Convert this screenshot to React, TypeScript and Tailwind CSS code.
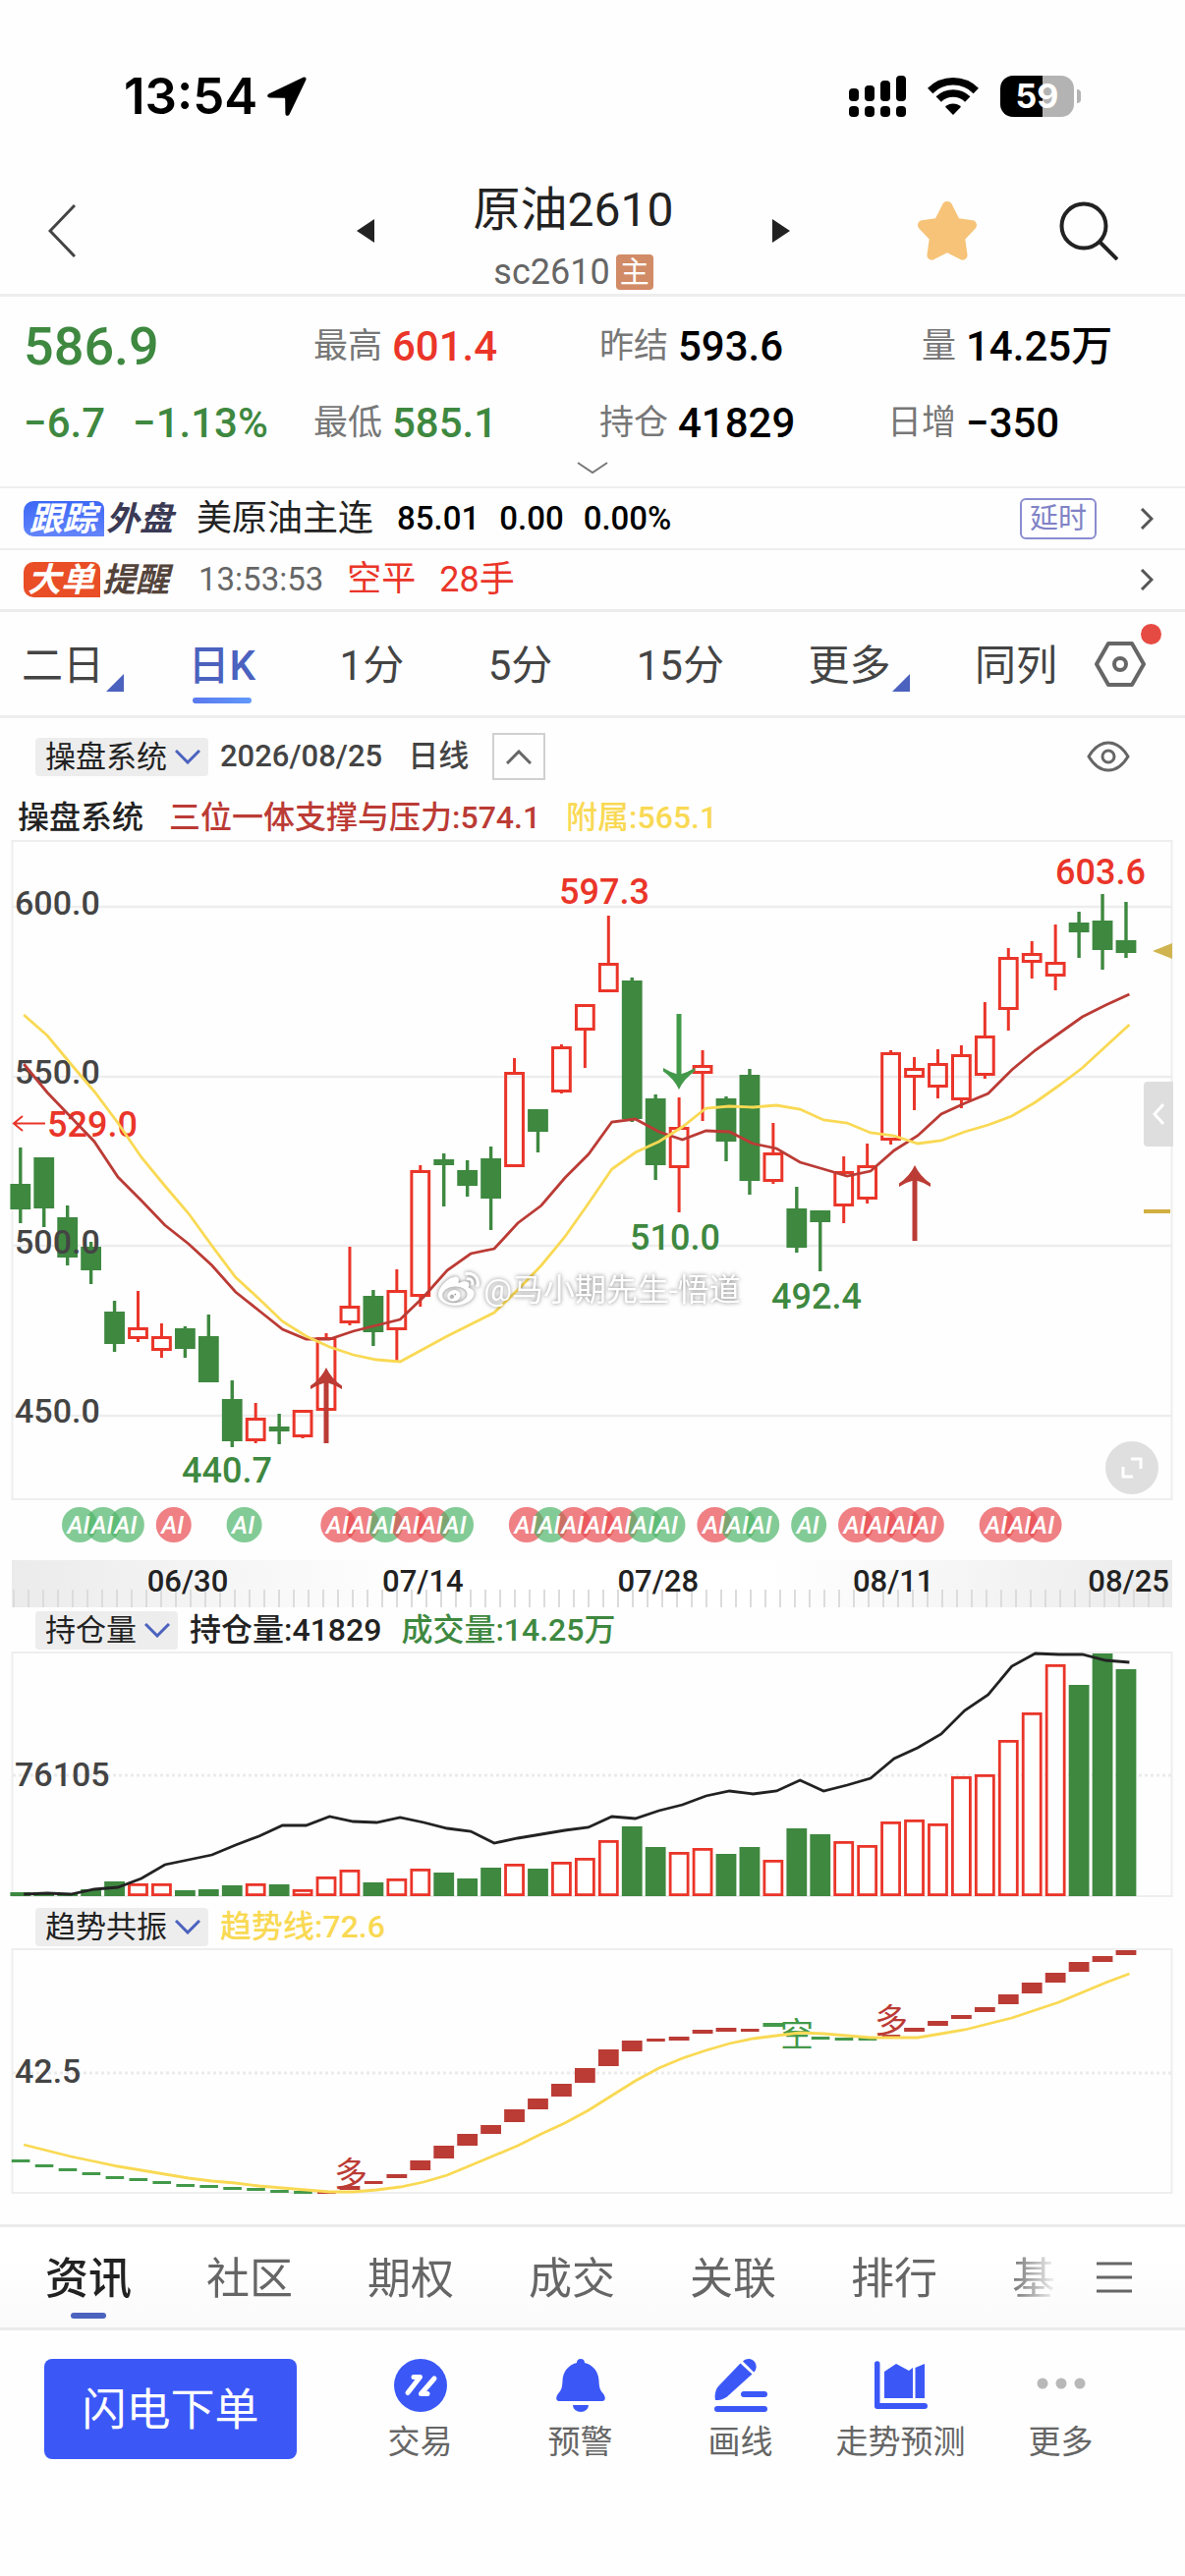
import { useState } from "react";
import type { ReactNode } from "react";
import { clsx } from "clsx";
import { FaWeibo } from "react-icons/fa";

type Candle = {
  up: boolean;
  high: number;
  top: number;
  bottom: number;
  low: number;
};

// All panes share one plot space 1206 units wide; each <svg> shows its own band of it.
const STEP = 23.94;
const barX = (i: number) => 20.8 + i * STEP;
const lineX = (i: number) => 24.2 + i * STEP;

const RED = "#ea3529";
const GREEN = "#3e8840";
const DARK_RED = "#bb3b35";
const YELLOW = "#f9d954";

// up, high, top, bottom, low
const RAW: [0 | 1, number, number, number, number][] = [
  [0, 1168, 1205, 1231, 1245],
  [0, 1178, 1178, 1230, 1249],
  [0, 1227, 1239, 1280, 1288],
  [0, 1264, 1269, 1293, 1307],
  [0, 1324, 1335, 1368, 1376],
  [1, 1314, 1351, 1363, 1366],
  [1, 1347, 1360, 1375, 1382],
  [0, 1350, 1352, 1373, 1382],
  [0, 1338, 1360, 1407, 1407],
  [0, 1405, 1424, 1467, 1473],
  [1, 1428, 1443, 1467, 1469],
  [0, 1439, 1452, 1457, 1470],
  [1, 1435, 1435, 1463, 1464],
  [1, 1357, 1361, 1436, 1436],
  [1, 1269, 1329, 1347, 1349],
  [0, 1313, 1319, 1356, 1370],
  [1, 1292, 1313, 1354, 1385],
  [1, 1186, 1191, 1320, 1330],
  [0, 1174, 1180, 1186, 1228],
  [0, 1181, 1191, 1207, 1218],
  [0, 1167, 1179, 1220, 1252],
  [1, 1077, 1091, 1188, 1188],
  [0, 1129, 1129, 1152, 1173],
  [1, 1063, 1065, 1112, 1113],
  [1, 1022, 1022, 1049, 1087],
  [1, 932, 980, 1010, 1010],
  [0, 995, 998, 1139, 1142],
  [0, 1114, 1118, 1186, 1201],
  [1, 1117, 1147, 1189, 1234],
  [1, 1069, 1084, 1093, 1141],
  [0, 1116, 1118, 1162, 1182],
  [0, 1088, 1094, 1202, 1216],
  [1, 1143, 1173, 1203, 1205],
  [0, 1208, 1230, 1270, 1275],
  [0, 1232, 1232, 1244, 1294],
  [1, 1177, 1192, 1228, 1245],
  [1, 1164, 1186, 1221, 1225],
  [1, 1069, 1071, 1161, 1165],
  [1, 1076, 1087, 1097, 1130],
  [1, 1068, 1082, 1107, 1118],
  [1, 1064, 1073, 1120, 1128],
  [1, 1020, 1054, 1095, 1098],
  [1, 965, 974, 1028, 1049],
  [1, 958, 970, 980, 996],
  [1, 941, 979, 994, 1008],
  [0, 928, 939, 949, 975],
  [0, 910, 937, 967, 987],
  [0, 918, 957, 970, 975],
];

const CANDLES: Candle[] = RAW.map(([up, high, top, bottom, low]) => ({
  up: up === 1,
  high,
  top,
  bottom,
  low,
}));

const SUPPORT_LINE = [
  1083, 1112, 1137, 1162, 1198, 1222, 1247, 1266, 1288, 1315, 1334, 1353, 1363, 1363, 1355, 1349,
  1343, 1320, 1293, 1276, 1271, 1245, 1227, 1199, 1175, 1142, 1139, 1152, 1160, 1151, 1152, 1164,
  1169, 1183, 1190, 1197, 1192, 1171, 1156, 1134, 1123, 1113, 1089, 1069, 1052, 1035, 1023, 1012,
];

const AUX_LINE = [
  1033, 1054, 1083, 1111, 1143, 1178, 1207, 1235, 1268, 1300, 1322, 1345, 1360, 1371, 1379, 1384,
  1386, 1373, 1360, 1348, 1336, 1313, 1288, 1259, 1225, 1190, 1173, 1162, 1147, 1128, 1126, 1127,
  1125, 1129, 1140, 1143, 1153, 1156, 1164, 1161, 1152, 1145, 1136, 1122, 1105, 1087, 1065, 1043,
];

const VOLUME_TOPS = [
  1926, 1927, 1927, 1923, 1915, 1917, 1917, 1924, 1923, 1919, 1917, 1918, 1923, 1910, 1903, 1916,
  1912, 1902, 1906, 1912, 1901, 1897, 1902, 1895, 1891, 1873, 1859, 1880, 1885, 1881, 1887, 1880,
  1893, 1861, 1867, 1874, 1878, 1854, 1852, 1856, 1808, 1806, 1771, 1743, 1694, 1715, 1683, 1699,
];

const OPEN_INTEREST = [
  1928, 1927, 1928, 1923, 1921, 1912, 1898, 1893, 1888, 1878, 1869, 1858, 1858, 1849, 1854, 1855,
  1850, 1855, 1861, 1864, 1876, 1871, 1867, 1863, 1860, 1849, 1851, 1843, 1837, 1828, 1823, 1826,
  1823, 1812, 1823, 1817, 1810, 1790, 1779, 1765, 1741, 1725, 1696, 1683, 1684, 1684, 1690, 1692,
];

// trend bars: top, height
const TREND_BARS: [number, number][] = [
  [2197, 3], [2202, 3], [2206, 3], [2210, 3], [2214, 3], [2216, 3], [2219, 3], [2222, 3],
  [2223, 3], [2225, 3], [2226, 3], [2228, 3], [2229, 3], [2230, 2], [2224, 4], [2219, 3],
  [2212, 4], [2198, 10], [2183, 13], [2171, 12], [2162, 9], [2146, 13], [2135, 11], [2120, 13],
  [2104, 15], [2085, 17], [2076, 11], [2074, 3], [2072, 4], [2065, 4], [2063, 4], [2064, 3],
  [2058, 4], [2066, 3], [2072, 3], [2073, 3], [2073, 3], [2070, 3], [2063, 4], [2056, 5],
  [2050, 4], [2042, 5], [2029, 10], [2017, 11], [2007, 10], [1996, 10], [1990, 6], [1984, 5],
];

const TREND_LINE = [
  2182, 2188, 2194, 2199, 2204, 2208, 2212, 2216, 2219, 2221, 2224, 2226, 2228, 2230, 2230, 2228,
  2225, 2220, 2213, 2203, 2193, 2183, 2171, 2160, 2147, 2132, 2117, 2104, 2094, 2086, 2079, 2074,
  2071, 2068, 2069, 2071, 2073, 2073, 2073, 2069, 2065, 2059, 2053, 2045, 2037, 2027, 2017, 2008,
];

const AI_MARKERS: [number, "r" | "g"][] = [
  [0, "g"], [1, "g"], [2, "g"], [4, "r"], [7, "g"],
  [11, "r"], [12, "r"], [13, "g"], [14, "r"], [15, "r"], [16, "g"],
  [19, "r"], [20, "g"], [21, "r"], [22, "r"], [23, "r"], [24, "g"], [25, "g"],
  [27, "r"], [28, "g"], [29, "g"], [31, "g"],
  [33, "r"], [34, "r"], [35, "r"], [36, "r"],
  [39, "r"], [40, "r"], [41, "r"],
];

const points = (ys: number[]) => ys.map((y, i) => `${lineX(i).toFixed(1)},${y}`).join(" ");

function StatusBar() {
  return (
    <div className="flex items-center justify-between pt-[66px] pr-[106px] pb-7 pl-[126px] text-black">
      <div className="flex items-center gap-2.5">
        <span className="font-['Inter',sans-serif] text-[51px] leading-[64px] font-semibold">13:54</span>
        <svg viewBox="0 0 40 40" className="h-10 w-10">
          <path
            d="M36.5.7 2 17.200C-.8 18.600-.3 21.500 2.600 21.600L17 21.800c.8 0 1.200.4 1.200 1.200L18.400 37.400c.1 2.900 3 3.400 4.400.6L39.300 3.500C40.200 1.300 38.700-.2 36.500.7Z"
            fill="currentColor"
          />
        </svg>
      </div>
      <div className="flex items-center gap-[22px]">
        <svg viewBox="0 0 58 42" className="h-[42px] w-[58px]" fill="currentColor">
          {[13, 10, 5, 0].map((y, i) => (
            <g key={y}>
              <rect x={i * 16} y={y} width="10" height={26 - y} rx="4" />
              <rect x={i * 16} y="31" width="10" height="11" rx="4" />
            </g>
          ))}
        </svg>
        <svg viewBox="0 0 52 38" className="h-[38px] w-[52px]" fill="none" stroke="currentColor" strokeWidth="7.500">
          <path d="M2.700 13.500a33 33 0 0 1 46.600 0" />
          <path d="M11.200 22a21 21 0 0 1 29.600 0" />
          <path d="M26 38 18 29.800a11.500 11.500 0 0 1 16 0Z" fill="currentColor" stroke="none" />
        </svg>
        <div className="flex items-center gap-[3px]">
          <div className="flex h-[42px] w-[75px] items-center justify-center rounded-[13px] bg-linear-to-r from-black from-58% to-[#b3b3b3] to-58% font-['Inter',sans-serif] text-[34px] leading-[42px] font-bold text-white">
            59
          </div>
          <div className="h-3.5 w-1 rounded-r-full bg-[#b3b3b3]" />
        </div>
      </div>
    </div>
  );
}

function TitleBar() {
  return (
    <header className="relative flex items-center justify-between border-b-[3px] border-[#ededed] pt-6 pr-[68px] pb-[11px] pl-[49px]">
      <button aria-label="返回">
        <svg viewBox="0 0 28 54" className="h-[54px] w-7" fill="none" stroke="#444" strokeWidth="3">
          <path d="M27 1 2 27l25 26" />
        </svg>
      </button>
      <div className="absolute left-[363px] right-[402px] flex items-center justify-between">
        <button aria-label="上一个">
          <svg viewBox="0 0 18 24" className="h-6 w-[18px]" fill="#222">
            <path d="M18 0v24L0 12Z" />
          </svg>
        </button>
        <div className="flex flex-col items-center">
          <h1 className="text-[48px] leading-[84px] text-[#222]">原油2610</h1>
          <div className="flex items-center gap-1.5">
            <span className="text-[36px] leading-[42px] text-[#666]">sc2610</span>
            <span className="w-[38px] rounded bg-[#d18b66] text-center text-[30px] leading-9 text-white">主</span>
          </div>
        </div>
        <button aria-label="下一个">
          <svg viewBox="0 0 18 24" className="h-6 w-[18px]" fill="#222">
            <path d="M0 0v24l18-12Z" />
          </svg>
        </button>
      </div>
      <div className="flex h-[106px] items-center gap-[84px]">
        <button aria-label="自选">
          <svg viewBox="0 0 60 60" className="h-[60px] w-[60px]" fill="#f6c378">
            <path d="M25.500 2.500c1.700-3.400 7.300-3.400 9 0L42 17.200 56 19.300c4 .6 5.300 5.600 2.500 8.500L48.300 38.500 50.500 54c.6 4-3.600 7-7.100 5L30 52.200 16.600 59c-3.500 2-7.700-1-7.100-5l2.200-15.500L1.500 27.800C-1.300 24.900 0 19.900 4 19.300L18 17.200Z" />
          </svg>
        </button>
        <button aria-label="搜索">
          <svg viewBox="0 0 60 60" className="h-[60px] w-[60px]" fill="none" stroke="#222" strokeWidth="4">
            <circle cx="25" cy="25" r="22.500" />
            <path d="m41 41 18 18" />
          </svg>
        </button>
      </div>
    </header>
  );
}

function Quote({ label, value, tone }: { label: string; value: string; tone?: string }) {
  return (
    <div className="flex items-center gap-2.5">
      <span className="w-[70px] text-right text-[35px] text-[#777]">{label}</span>
      <span className={clsx("text-[42px] font-medium", tone ?? "text-black")}>{value}</span>
    </div>
  );
}

function QuoteBlock() {
  return (
    <section className="border-b-2 border-[#efefef] pt-3 pb-3 pl-6">
      <div className="grid grid-cols-[295fr_291fr_293fr_303fr] leading-[78px]">
        <span className="text-[54px] font-medium text-[#3e8840]">586.9</span>
        <Quote label="最高" value="601.4" tone="text-[#ea3529]" />
        <Quote label="昨结" value="593.6" />
        <Quote label="量" value="14.25万" />
        <div className="flex gap-7 text-[42px] font-medium text-[#3e8840]">
          <span>−6.7</span>
          <span>−1.13%</span>
        </div>
        <Quote label="最低" value="585.1" tone="text-[#3e8840]" />
        <Quote label="持仓" value="41829" />
        <Quote label="日增" value="−350" />
      </div>
      <button aria-label="展开" className="mx-auto block pr-6">
        <svg viewBox="0 0 32 13" className="h-[13px] w-8" fill="none" stroke="#777" strokeWidth="2">
          <path d="m1 1 15 10L31 1" />
        </svg>
      </button>
    </section>
  );
}

function Chevron() {
  return (
    <svg viewBox="0 0 14 22" className="h-[22px] w-3.5" fill="none" stroke="#555" strokeWidth="3">
      <path d="m2 1 10 10L2 21" />
    </svg>
  );
}

function NoticeRow({ children, last }: { children: ReactNode; last?: boolean }) {
  return (
    <a
      href="#"
      className={clsx(
        "flex h-[63px] items-center border-[#ededed] pr-8 pl-6 leading-[60px]",
        last ? "border-b-[3px]" : "border-b-2"
      )}
    >
      {children}
      <Chevron />
    </a>
  );
}

function Notices() {
  return (
    <section>
      <NoticeRow>
        <span className="flex items-center text-[34px] font-bold italic">
          <span className="h-9 w-[82px] rounded-l-[10px] rounded-tr-[8px] bg-linear-to-b from-[#3d68f6] to-[#6384fa] pl-1.5 leading-9 text-white">
            跟踪
          </span>
          <span className="w-[72px] pl-0.5 text-[#3b3a55]">外盘</span>
        </span>
        <span className="ml-[22px] text-[36px] text-[#222]">美原油主连</span>
        <span className="ml-6 flex gap-5 text-[33px] font-medium text-black">
          <span>85.01</span>
          <span>0.00</span>
          <span>0.00%</span>
        </span>
        <span className="mr-[44px] ml-auto rounded-md border-2 border-[#8a8cd0] px-2 text-[29px] leading-[38px] text-[#8082c6]">
          延时
        </span>
      </NoticeRow>
      <NoticeRow last>
        <span className="flex items-center text-[34px] font-bold italic">
          <span className="h-9 w-[78px] rounded-l-[10px] rounded-tr-[8px] bg-[#e94e26] pl-1 leading-9 text-white">
            大单
          </span>
          <span className="w-[72px] pl-0.5 text-[#54443c]">提醒</span>
        </span>
        <span className="ml-[28px] text-[33px] text-[#666]">13:53:53</span>
        <span className="ml-6 text-[35px] text-[#ea3529]">空平</span>
        <span className="mr-auto ml-6 text-[36px] text-[#ea3529]">28手</span>
      </NoticeRow>
    </section>
  );
}

function CornerMark() {
  return (
    <svg viewBox="0 0 18 18" className="absolute bottom-3 left-full ml-0.5 h-[18px] w-[18px]" fill="#4b62be">
      <path d="M18 0v18H0Z" />
    </svg>
  );
}

function PeriodTabs() {
  const [active, setActive] = useState("日K");
  const tabs = [
    { name: "二日", more: true },
    { name: "日K" },
    { name: "1分" },
    { name: "5分" },
    { name: "15分" },
    { name: "更多", more: true },
    { name: "同列" },
  ];
  return (
    <nav className="flex h-[108px] items-center gap-[38px] border-b-[3px] border-[#ededed] pr-10 pl-[22px]">
      <div className="flex flex-1 justify-between">
        {tabs.map((t) => (
          <button
            key={t.name}
            onClick={() => setActive(t.name)}
            className={clsx(
              "relative flex h-20 items-center pt-1 text-[42px]",
              active === t.name ? "font-medium text-[#4b62be]" : "text-[#444]"
            )}
          >
            {t.name}
            {t.more && <CornerMark />}
            {active === t.name && (
              <span className="absolute inset-x-1 bottom-0 h-1.5 rounded-full bg-linear-to-r from-[#5a78ee] to-[#5f99fa]" />
            )}
          </button>
        ))}
      </div>
      <button aria-label="设置" className="relative">
        <svg viewBox="0 0 52 46" className="h-[46px] w-[52px]" fill="none" stroke="#666" strokeWidth="4">
          <path d="M14 2h24l12 21-12 21H14L2 23Z" strokeLinejoin="round" />
          <circle cx="26" cy="23" r="6" />
        </svg>
        <span className="absolute -top-[18px] -right-4 h-[21px] w-[21px] rounded-full bg-[#e64b43]" />
      </button>
    </nav>
  );
}

function IndicatorSelect({ label, options }: { label: string; options: string[] }) {
  return (
    <div className="relative flex h-[39px] items-center rounded bg-[#ededed]">
      <select
        aria-label={label}
        className="-my-1 h-[47px] appearance-none pr-[42px] pl-2.5 text-[31px] leading-[47px] font-normal text-[#222]"
      >
        {options.map((o) => (
          <option key={o}>{o}</option>
        ))}
      </select>
      <svg
        viewBox="0 0 26 15"
        className="pointer-events-none absolute top-3 right-2 h-[15px] w-[26px]"
        fill="none"
        stroke="#4b62be"
        strokeWidth="3"
      >
        <path d="m1 1 12 12L25 1" />
      </svg>
    </div>
  );
}

function ChartToolbar() {
  return (
    <>
      <div className="flex h-[78px] items-center pr-14 pl-9 text-[31px] font-medium text-[#444]">
        <IndicatorSelect label="主图指标" options={["操盘系统", "均线", "布林线"]} />
        <span className="ml-3">2026/08/25</span>
        <span className="ml-[26px]">日线</span>
        <button
          aria-label="收起"
          className="ml-6 flex h-12 w-[54px] items-center justify-center border-2 border-[#d0d0d0]"
        >
          <svg viewBox="0 0 26 15" className="h-[15px] w-[26px]" fill="none" stroke="#666" strokeWidth="3">
            <path d="M1 14 13 2l12 12" />
          </svg>
        </button>
        <button aria-label="显示" className="ml-auto">
          <svg viewBox="0 0 44 32" className="h-8 w-11" fill="none" stroke="#666" strokeWidth="3">
            <path d="M2 16C8 6 15 2 22 2s14 4 20 14c-6 10-13 14-20 14S8 26 2 16Z" />
            <circle cx="22" cy="16" r="6" />
          </svg>
        </button>
      </div>
      <p className="flex gap-[26px] pl-[18px] text-[32px] leading-[46px] font-medium">
        <span className="text-[#222]">操盘系统</span>
        <span className="text-[#bb3b35]">三位一体支撑与压力:574.1</span>
        <span className="text-[#f9d954]">附属:565.1</span>
      </p>
    </>
  );
}

function SignalArrow({ x, tip, dir, color }: { x: number; tip: number; dir: 1 | -1; color: string }) {
  return (
    <g transform={`translate(${x} ${tip}) scale(1 ${dir})`} fill={color}>
      <rect x="-2.500" y="8" width="5" height="69" />
      <path d="M0 0Q5 11 16 18.500V22Q8 17 0 15Q-8 17-16 22V18.500Q-5 11 0 0Z" />
    </g>
  );
}

function CandleChart() {
  return (
    <div className="relative">
      <svg viewBox="0 855 1206 674" className="block w-full" fontSize="34" fontWeight="500">
        <rect x="12.500" y="856" width="1180" height="670" fill="none" stroke="#eee" strokeWidth="2" />
        {[923, 1096, 1268, 1441].map((y) => (
          <path key={y} d={`M13 ${y}H1193`} stroke="#ededed" strokeWidth="2.500" />
        ))}

        {CANDLES.map((c, i) => {
          const x = barX(i);
          const w = 20.8;
          return c.up ? (
            <g key={i} stroke={RED} strokeWidth="3" fill="none">
              <path d={`M${x} ${c.high}V${c.top + 1}M${x} ${c.bottom - 1}V${c.low}`} />
              <rect x={x - w / 2 + 1.500} y={c.top + 1.500} width={w - 3} height={c.bottom - c.top - 3} />
            </g>
          ) : (
            <g key={i} fill={GREEN}>
              <rect x={x - 1.700} y={c.high} width="3.400" height={c.low - c.high} />
              <rect x={x - w / 2} y={c.top} width={w} height={c.bottom - c.top} />
            </g>
          );
        })}

        <g fill="#444">
          <text x="15" y="931">600.0</text>
          <text x="15" y="1103">550.0</text>
          <text x="15" y="1276">500.0</text>
          <text x="15" y="1448">450.0</text>
        </g>
        <g fill={RED} fontSize="36">
          <path d="M46 1143.500H14M23 1136l-9 7.500 9 7.500" fill="none" stroke={RED} strokeWidth="2" />
          <text x="48" y="1157">529.0</text>
          <text x="615" y="920" textAnchor="middle">597.3</text>
          <text x="1120" y="900" textAnchor="middle">603.6</text>
        </g>
        <g fill={GREEN} fontSize="36" textAnchor="middle">
          <text x="687" y="1272">510.0</text>
          <text x="831" y="1332">492.4</text>
          <text x="231" y="1509">440.7</text>
        </g>

        <polyline points={points(SUPPORT_LINE)} fill="none" stroke={DARK_RED} strokeWidth="2.800" />
        <polyline points={points(AUX_LINE)} fill="none" stroke={YELLOW} strokeWidth="2.800" />
        <SignalArrow x={332} tip={1392} dir={1} color={DARK_RED} />
        <SignalArrow x={931} tip={1186} dir={1} color={DARK_RED} />
        <SignalArrow x={691} tip={1109} dir={-1} color="#43994a" />

        <path d="M1193 960v16l-20-8Z" fill="#d0b450" />
        <path d="M1164 1233h27" stroke="#d0b040" strokeWidth="4" />
      </svg>

      <div className="absolute top-[68%] left-[37%] flex -translate-y-1/2 items-center gap-1 text-white drop-shadow-[0_0_2px_rgba(0,0,0,0.5)]">
        <FaWeibo className="h-[42px] w-[42px]" />
        <span className="text-[32px] leading-10">@马小期先生-悟道</span>
      </div>
      <button
        aria-label="侧栏"
        className="absolute top-[36.500%] right-3 flex h-[66px] w-[30px] items-center justify-center rounded-l bg-[#dedede]"
      >
        <svg viewBox="0 0 12 22" className="h-[22px] w-3" fill="none" stroke="#fff" strokeWidth="3">
          <path d="M11 1 2 11l9 10" />
        </svg>
      </button>
      <button
        aria-label="全屏"
        className="absolute right-[27px] bottom-2 flex h-[54px] w-[54px] items-center justify-center rounded-full bg-[#dfdfdf]"
      >
        <svg viewBox="0 0 22 22" className="h-[22px] w-[22px]" fill="none" stroke="#fff" strokeWidth="3">
          <path d="M10 2h10v10M2 10v10h10" />
        </svg>
      </button>
    </div>
  );
}

function AiMarkers() {
  return (
    <svg viewBox="0 1529 1206 59" className="block w-full">
      {AI_MARKERS.map(([k, tone]) => (
        <circle
          key={k}
          cx={81 + k * STEP}
          cy="1552"
          r="18"
          fill={tone === "r" ? "#e84a50" : "#4fb56a"}
          opacity="0.7"
        />
      ))}
      {/* letters go above every disc so that the overlapping ones stay readable */}
      <g fontSize="25" fontWeight="500" fontStyle="italic" fill="#fff" textAnchor="middle">
        {AI_MARKERS.map(([k]) => (
          <text key={k} x={80 + k * STEP} y="1561">
            AI
          </text>
        ))}
      </g>
    </svg>
  );
}

function DateRuler() {
  const dates = ["06/30", "07/14", "07/28", "08/11", "08/25"];
  return (
    <svg viewBox="0 1588 1206 50" className="block w-full" fontSize="31" fontWeight="500">
      <defs>
        <linearGradient id="ruler">
          <stop offset="0" stopColor="#ebebeb" />
          <stop offset="0.350" stopColor="#fff" />
          <stop offset="0.650" stopColor="#fff" />
          <stop offset="1" stopColor="#ebebeb" />
        </linearGradient>
      </defs>
      <rect x="12" y="1588" width="1181" height="48" fill="url(#ruler)" />
      {Array.from({ length: 79 }, (_, i) => (
        <path key={i} d={`M${14 + i * 15} 1618v18`} stroke="#dcdcdc" strokeWidth="2" />
      ))}
      {dates.map((d, i) => (
        <text key={d} x={191 + i * 239.4} y="1620" textAnchor="middle" fill="#222">
          {d}
        </text>
      ))}
    </svg>
  );
}

function VolumePane() {
  return (
    <svg viewBox="0 1681 1206 251" className="block w-full">
      <rect x="12.500" y="1682" width="1180" height="248" fill="none" stroke="#eee" strokeWidth="2" />
      <path d="M13 1807H1193" stroke="#ebebeb" strokeWidth="3" strokeDasharray="3 3" />
      {VOLUME_TOPS.map((y, i) => {
        const x = barX(i) - 10.4;
        return CANDLES[i].up ? (
          <rect
            key={i}
            x={x + 1.400}
            y={y + 1.400}
            width="18"
            height={Math.max(1930 - y - 2.800, 1)}
            fill="#fff"
            stroke={RED}
            strokeWidth="2.800"
          />
        ) : (
          <rect key={i} x={x} y={y} width="20.800" height={1930 - y} fill={GREEN} />
        );
      })}
      <text x="15" y="1818" fontSize="34" fontWeight="500" fill="#444">
        76105
      </text>
      <polyline points={points(OPEN_INTEREST)} fill="none" stroke="#222" strokeWidth="2.800" />
    </svg>
  );
}

function TrendPane() {
  const isDown = (i: number) => i < 13 || (i > 31 && i < 37);
  return (
    <svg viewBox="0 1982 1206 251" className="block w-full">
      <rect x="12.500" y="1983" width="1180" height="248" fill="none" stroke="#eee" strokeWidth="2" />
      <path d="M13 2109H1193" stroke="#ebebeb" strokeWidth="3" strokeDasharray="3 3" />
      {TREND_BARS.map(([y, h], i) => (
        <rect
          key={i}
          x={barX(i) - (h < 4 ? 9 : 10.4)}
          y={y}
          width={h < 4 ? 18.600 : 20.800}
          height={h}
          fill={isDown(i) ? "#43994a" : DARK_RED}
        />
      ))}
      <text x="15" y="2119" fontSize="34" fontWeight="500" fill="#444">
        42.5
      </text>
      <g fontSize="34">
        <text x="340" y="2224" fill={DARK_RED}>多</text>
        <text x="890" y="2068" fill={DARK_RED}>多</text>
        <text x="794" y="2082" fill="#43994a">空</text>
      </g>
      <polyline points={points(TREND_LINE)} fill="none" stroke={YELLOW} strokeWidth="2.800" />
    </svg>
  );
}

function PaneLegend({ children }: { children: ReactNode }) {
  return (
    <div className="flex items-center gap-3 pl-9 text-[32px] leading-[43px] font-medium">{children}</div>
  );
}

function InfoTabs() {
  const [active, setActive] = useState("资讯");
  return (
    <nav className="flex h-[108px] items-center border-y-[3px] border-[#ebebeb] bg-linear-to-b from-white from-30% to-[#fafafa] pr-[54px] pl-[46px]">
      <div className="flex min-w-0 flex-1 gap-[76px] overflow-hidden pt-2 mask-r-from-94% mask-r-to-99%">
        {["资讯", "社区", "期权", "成交", "关联", "排行", "基本面"].map((name) => (
          <button
            key={name}
            onClick={() => setActive(name)}
            className={clsx(
              "flex h-[84px] shrink-0 flex-col items-center text-[44px] leading-[80px]",
              active === name ? "font-medium text-[#222]" : "text-[#666]"
            )}
          >
            {name}
            {active === name && <span className="-mt-1.5 h-1.5 w-9 shrink-0 rounded-full bg-[#4b62be]" />}
          </button>
        ))}
      </div>
      <button aria-label="菜单" className="ml-7">
        <svg viewBox="0 0 36 32" className="h-8 w-9" stroke="#666" strokeWidth="3">
          <path d="M0 2h36M0 16h36M0 30h36" />
        </svg>
      </button>
    </nav>
  );
}

const ACTIONS: { name: string; icon: ReactNode }[] = [
  {
    name: "交易",
    icon: (
      <>
        <circle cx="27" cy="27" r="27" fill="#3b58f7" />
        <path
          d="M20 18.500H26.500L14 34.500M34 35.500H27.500L41 20"
          fill="none"
          stroke="#fff"
          strokeWidth="5"
          strokeLinecap="round"
          strokeLinejoin="round"
        />
      </>
    ),
  },
  {
    name: "预警",
    icon: (
      <g fill="#3b58f7">
        <path d="M27 0c2.500 0 4 1.500 4 4 9 2.500 14 9 14.500 18 .3 7 1 9.500 4.500 13.500 2.500 3 2.500 7.500-1 7.500H5c-3.500 0-3.500-4.500-1-7.500C7.500 31.500 8.200 29 8.500 22 9 13 14 6.500 23 4c0-2.500 1.500-4 4-4Z" />
        <path d="M19 47h16a8 7 0 0 1-16 0Z" />
      </g>
    ),
  },
  {
    name: "画线",
    icon: (
      <g fill="#3b58f7">
        <path d="M26.500 4.500 38.500 15.500 13 38.500C9 41.500 5 42 1 42 0 37 1 32 4 28Z" />
        <path d="M29 2.500C33-1 38-.5 41 3c2.500 3.500 2 8-.8 10.500Z" />
        <rect x="27" y="33" width="27" height="6" rx="3" />
        <rect y="48" width="54" height="6" rx="3" />
      </g>
    ),
  },
  {
    name: "走势预测",
    icon: (
      <g fill="#3b58f7">
        <path d="M0 5a2.700 2.700 0 0 1 5.500 0v40H51a3 3 0 0 1 0 6H2.500C1 51 0 50 0 48.500Z" />
        <path d="M10 13 22 5l13 7 4-3v31H10Z" />
        <path d="M41.500 9 51 5v35h-9.500Z" />
      </g>
    ),
  },
  {
    name: "更多",
    icon: (
      <g fill="#b8b8b8">
        <circle cx="8" cy="25" r="5.500" />
        <circle cx="27" cy="25" r="5.500" />
        <circle cx="46" cy="25" r="5.500" />
      </g>
    ),
  },
];

function ActionBar() {
  return (
    <footer className="flex items-start pt-[29px] pr-[45px] pb-[110px] pl-[45px]">
      <button className="h-[102px] w-[257px] rounded-lg bg-[#3b58f7] pt-1 text-[45px] text-white">闪电下单</button>
      <div className="ml-[44px] grid flex-1 grid-cols-5">
        {ACTIONS.map((a) => (
          <button key={a.name} className="flex flex-col items-center gap-2 text-[33px] leading-[46px] text-[#666]">
            <svg viewBox="0 0 54 54" className="h-[54px] w-[54px]">
              {a.icon}
            </svg>
            <span className="whitespace-nowrap">{a.name}</span>
          </button>
        ))}
      </div>
    </footer>
  );
}

export default function App() {
  return (
    <main className="min-h-screen w-full bg-[#fefefe] font-['Roboto','Noto_Sans_CJK_SC',sans-serif]">
      <StatusBar />
      <TitleBar />
      <QuoteBlock />
      <Notices />
      <PeriodTabs />
      <ChartToolbar />
      <CandleChart />
      <AiMarkers />
      <DateRuler />
      <PaneLegend>
        <IndicatorSelect label="副图一" options={["持仓量", "成交量"]} />
        <span className="text-[#222]">持仓量:41829</span>
        <span className="ml-2 text-[#3e8840]">成交量:14.25万</span>
      </PaneLegend>
      <VolumePane />
      <div className="pt-2">
        <PaneLegend>
          <IndicatorSelect label="副图二" options={["趋势共振", "MACD"]} />
          <span className="text-[#f9d954]">趋势线:72.6</span>
        </PaneLegend>
      </div>
      <TrendPane />
      <div className="pt-[30px]">
        <InfoTabs />
      </div>
      <ActionBar />
    </main>
  );
}
